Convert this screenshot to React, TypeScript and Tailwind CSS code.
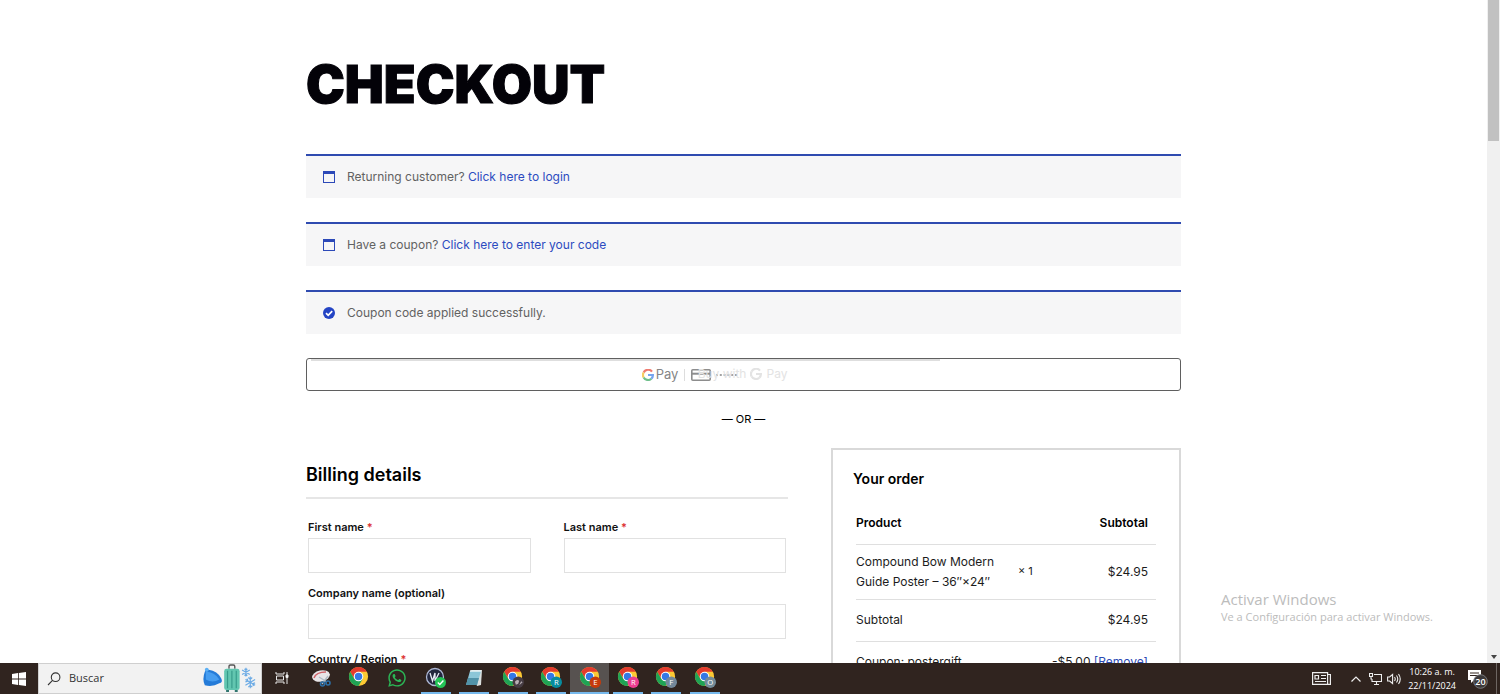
import type { ReactNode } from "react";
import { FaWhatsapp } from "react-icons/fa";

function WindowIcon() {
  return (
    <svg viewBox="0 0 12 12" className="size-3 shrink-0" aria-hidden="true">
      <path d="M0 0h12v12H0z M1 3v8h10V3z" fill="#2c49b8" fillRule="evenodd" />
    </svg>
  );
}

function CheckIcon() {
  return (
    <svg viewBox="0 0 12 12" className="size-3 shrink-0" aria-hidden="true">
      <circle cx="6" cy="6" r="6" fill="#2444c4" />
      <path d="M3 6.2l2.2 2.2 4-4.3" fill="none" stroke="#fff" strokeWidth="1.7" />
    </svg>
  );
}

function Notice({ icon, children }: { icon: ReactNode; children: ReactNode }) {
  return (
    <div className="mb-6 flex h-11 items-center gap-3 border-t-2 border-[#2f4bb0] bg-[#f6f6f7] px-[17px] text-[12px] text-[#626262]">
      {icon}
      <p>{children}</p>
    </div>
  );
}

function GoogleG({ mono = false }: { mono?: boolean }) {
  const c = mono
    ? ["#e3e3e3", "#e3e3e3", "#e3e3e3", "#e3e3e3"]
    : ["#ee7b70", "#f6cd62", "#6fbf8b", "#76a5ef"];
  return (
    <svg viewBox="0 0 24 24" className="size-3" fill="none" strokeWidth="4.4" aria-hidden="true">
      <path d="M20 5.2A10 10 0 0 0 3.3 7" stroke={c[0]} />
      <path d="M3.3 7a10 10 0 0 0 0 10" stroke={c[1]} />
      <path d="M3.3 17A10 10 0 0 0 18.6 19.5" stroke={c[2]} />
      <path d="M18.6 19.5A10 10 0 0 0 21.8 12H12" stroke={c[3]} />
    </svg>
  );
}

function PayButton() {
  return (
    <button
      type="button"
      aria-label="Google Pay"
      className="relative flex h-[33px] w-full items-center justify-center rounded-[3px] border border-[#5f5f5f] bg-white"
    >
      <span className="absolute top-0 left-1 h-0.5 w-[72%] bg-[#dedede]" />
      <span className="relative mr-[106px] flex items-center gap-0.5 text-[13px] text-[#858585]">
        <GoogleG />
        <span>Pay</span>
        <span className="ml-1 h-3 w-px bg-[#dddddd]" />
        <svg viewBox="0 0 20 12" className="ml-1 h-3 w-5" fill="none" aria-hidden="true">
          <rect x="0.8" y="0.8" width="18.4" height="10.4" rx="1" stroke="#8d8d8d" strokeWidth="1.6" />
          <path d="M1 4.7h18" stroke="#8d8d8d" strokeWidth="2" />
        </svg>
        <svg viewBox="0 0 24 4" className="ml-0.5 h-1 w-6" aria-hidden="true">
          <path d="M1 2h22" stroke="#858585" strokeWidth="1.6" strokeDasharray="2 1.8" />
        </svg>
        <span className="absolute top-0 left-[56px] flex items-center gap-1 text-[12px] whitespace-nowrap text-[#e3e3e3]">
          Buy with <GoogleG mono /> Pay
        </span>
      </span>
    </button>
  );
}

function Field({ id, label, required = false }: { id: string; label: string; required?: boolean }) {
  return (
    <div className="flex min-w-0 flex-1 flex-col">
      <label htmlFor={id} className="text-[11px] leading-[21px] font-semibold text-[#111111]">
        {label} {required && <span className="text-[#d33]">*</span>}
      </label>
      <input id={id} type="text" className="h-[35px] w-full border border-[#e1e1e1] bg-white px-2 text-[13px] outline-none" />
    </div>
  );
}

function ChromeIcon({ badge, color }: { badge?: string; color?: string }) {
  return (
    <svg viewBox="0 0 23 24" className="h-[23px] w-[22px]" aria-hidden="true">
      <circle cx="11" cy="11" r="10" fill="#fcc934" />
      <path d="M11 6h8.66A10 10 0 0 0 2.34 6l4.33 7.5z" fill="#e33b2e" />
      <path d="M2.34 6A10 10 0 0 0 11 21l4.33-7.5L11 16l-4.33-2.5z" fill="#1fa355" />
      <circle cx="11" cy="11" r="5" fill="#fff" />
      <circle cx="11" cy="11" r="3.9" fill="#3478e5" />
      {color && <circle cx="17" cy="17" r="6" fill={color} />}
      {badge && (
        <text x="17" y="20" textAnchor="middle" fontSize="8" fill="#fff" fontFamily="Open Sans, sans-serif">
          {badge}
        </text>
      )}
      {color && !badge && (
        <path d="M13.5 16.5q2-3 4.5-1l-1 3-2.5 1zM18 20l2-4 1.5 1" fill="#b9b0b4" />
      )}
    </svg>
  );
}

function TaskItem({ label, children, running, active }: { label: string; children: ReactNode; running?: boolean; active?: boolean }) {
  return (
    <button
      type="button"
      aria-label={label}
      className={`flex flex-col items-center ${active ? "bg-[#575250]" : ""}`}
    >
      <span className="flex flex-1 items-center justify-center">{children}</span>
      <span className={`h-0.5 ${active ? "w-full" : "w-[30px]"} ${running ? "bg-[#76b9ed]" : ""}`} />
    </button>
  );
}

function Taskbar() {
  return (
    <footer className="flex h-[31px] shrink-0 items-stretch bg-[#30241f] font-['Open_Sans',sans-serif] text-white">
      <button type="button" aria-label="Inicio" className="flex w-[38px] items-center justify-center">
        <svg viewBox="0 0 14 14" className="size-[14px]" fill="#fff" aria-hidden="true">
          <path d="M0 2l6-.9v5.5H0zM6.8 1 14 0v6.6H6.8zM0 7.4h6v5.5L0 12zM6.8 7.4H14V14l-7.2-1z" />
        </svg>
      </button>
      <label className="flex w-56 items-center gap-2 border border-[#cfcfcf] bg-[#f2f2f2] pr-1 pl-2 text-[#333333]">
        <svg viewBox="0 0 14 14" className="size-[14px] shrink-0" fill="none" stroke="#333" strokeWidth="1.1" aria-hidden="true">
          <circle cx="8.6" cy="5.2" r="4.3" />
          <path d="M5.5 8.3 1 13" />
        </svg>
        <input type="text" aria-label="Buscar" placeholder="Buscar" className="min-w-0 flex-1 bg-transparent text-[11px] outline-none placeholder:text-[#333333]" />
        <svg viewBox="0 0 56 30" className="h-[29px] w-14 shrink-0" aria-hidden="true">
          <path d="M3 8q1-3 4-2 9 1 13 9 2 4-2 5-7 4-15 2-3-6 0-14z" fill="#247bd8" />
          <path d="M4 8q9 0 14 8-7 4-14 0z" fill="#469df0" />
          <circle cx="5" cy="6" r="2" fill="#5cb0f5" />
          <path d="M28 5V2.5q0-1.500 1.500-1.500h3Q34 1 34 2.500V5" fill="none" stroke="#555" strokeWidth="1.400" />
          <rect x="23" y="5" width="16" height="22" rx="2.500" fill="#62c6b0" />
          <path d="M26.500 7v18M31 7v18M35.500 7v18" stroke="#379b8b" strokeWidth="1.200" />
          <path d="M25 27v2h3v-2m6 0v2h3v-2" fill="#31766f" />
          <g stroke="#6cabe5" strokeWidth="1.200" fill="none">
            <path d="M45.500 4v9M41.500 6.200l8 4.600M49.500 6.200l-8 4.600M44 5l1.500 1.500L47 5M44 12l1.500-1.500L47 12" />
            <path d="M50 13v12M45 16l10 6M55 16l-10 6M48 14l2 2 2-2M48 24l2-2 2 2M45 18.500l2.500-.8-.8-2.500M55 19.500l-2.500.8.8 2.500" />
          </g>
        </svg>
      </label>
      <nav aria-label="Aplicaciones" className="ml-px grid w-[461px] grid-cols-12">
        <TaskItem label="Vista de tareas">
          <svg viewBox="0 0 14 12" className="h-3 w-[14px]" fill="none" stroke="#e8e8e8" strokeWidth="1" aria-hidden="true">
            <path d="M1 0v2h8V0M1 12v-2h8v2M1.500 4h7v4h-7zM12 0v12" />
            <path d="M11 3h2v2.500h-2z" fill="#fff" />
          </svg>
        </TaskItem>
        <TaskItem label="Recortes">
          <svg viewBox="0 0 22 20" className="h-5 w-[22px]" aria-hidden="true">
            <ellipse cx="11" cy="8" rx="9" ry="5.500" fill="#e8e5e8" transform="rotate(-12 11 8)" />
            <path d="M4 10q2-6 12-6" stroke="#d0646a" strokeWidth="1.500" fill="none" />
            <path d="M9 9l8 5M18 8l-6 8" stroke="#aebac4" strokeWidth="1.300" />
            <circle cx="12.500" cy="16" r="2" fill="none" stroke="#2d6fa8" strokeWidth="1.600" />
            <circle cx="18" cy="15" r="2" fill="none" stroke="#2d6fa8" strokeWidth="1.600" />
          </svg>
        </TaskItem>
        <TaskItem label="Chrome"><ChromeIcon /></TaskItem>
        <TaskItem label="WhatsApp"><FaWhatsapp className="size-5 text-[#2bb655]" /></TaskItem>
        <TaskItem label="VPN" running>
          <svg viewBox="0 0 22 22" className="size-[22px]" aria-hidden="true">
            <circle cx="10" cy="10" r="8.500" fill="#22263d" stroke="#aeb8d5" strokeWidth="1.300" />
            <path d="M5 6l2.500 8L10 6v8l4-8" fill="none" stroke="#e7eaf4" strokeWidth="1.300" />
            <circle cx="15.500" cy="15.500" r="5.500" fill="#24c456" />
            <path d="M12.800 15.500l2 2 3.600-4" fill="none" stroke="#fff" strokeWidth="1.400" />
          </svg>
        </TaskItem>
        <TaskItem label="Bloc de notas" running>
          <svg viewBox="0 0 20 20" className="size-5" aria-hidden="true">
            <path d="M7 2h11l-1 15-4 1z" fill="#d9dedd" />
            <path d="M6 3h11l-4 14H2z" fill="#8cc6d8" />
            <path d="M4 10h11l-2 7H2z" fill="#5192a8" />
            <path d="M6 3h11" stroke="#e8f3f6" strokeWidth="1.500" />
          </svg>
        </TaskItem>
        <TaskItem label="Chrome perfil 1" running><ChromeIcon color="#453b42" /></TaskItem>
        <TaskItem label="Chrome perfil R" running><ChromeIcon color="#078b9e" badge="R" /></TaskItem>
        <TaskItem label="Chrome perfil E" running active><ChromeIcon color="#c63a0b" badge="E" /></TaskItem>
        <TaskItem label="Chrome perfil R2" running><ChromeIcon color="#ed3e91" badge="R" /></TaskItem>
        <TaskItem label="Chrome perfil F" running><ChromeIcon color="#73889a" badge="F" /></TaskItem>
        <TaskItem label="Chrome perfil O" running><ChromeIcon color="#738b98" badge="O" /></TaskItem>
      </nav>
      <div className="ml-auto flex items-center">
        <svg viewBox="0 0 19 13" className="mr-5 h-[13px] w-[19px]" fill="none" stroke="#eee" strokeWidth="1.200" aria-hidden="true">
          <path d="M.6.600h15v11.800H.600zM15.600 2.500h2.800v9.900h-3M9 3.500h5M9 6.500h5M3 9.500h11" />
          <path d="M3 3.500h3.500v3.500H3z" />
        </svg>
        <svg viewBox="0 0 10 6" className="mr-2 h-1.5 w-2.5" fill="none" stroke="#eee" strokeWidth="1.200" aria-hidden="true">
          <path d="M.5 5.500 5 1l4.500 4.500" />
        </svg>
        <svg viewBox="0 0 13 12" className="mr-[5px] h-3 w-[13px]" fill="none" stroke="#eee" strokeWidth="1.100" aria-hidden="true">
          <path d="M5 1.500h7.500v7H3V6M7.500 8.500v3M5 11.500h5M.5.500h3v3h-3zM2 3.500V6h1" />
        </svg>
        <svg viewBox="0 0 14 12" className="mr-[7px] h-3 w-[14px]" fill="none" stroke="#eee" strokeWidth="1.100" aria-hidden="true">
          <path d="M.6 4h2l3-2.500v9L2.600 8h-2zM7.500 4q1.500 2 0 4M9.500 2.500q2.500 3.500 0 7M11.500 1q3.500 5 0 10" />
        </svg>
        <div className="mr-3 text-center text-[9px] leading-[14px]">
          <p>10:26 a. m.</p>
          <p>22/11/2024</p>
        </div>
        <button type="button" aria-label="Notificaciones, 20" className="mr-2">
          <svg viewBox="0 0 20 20" className="size-5" aria-hidden="true">
            <path d="M0 1h13v10H6l-3 3v-3H0z" fill="#fff" />
            <path d="M2 4h9M2 6.500h9" stroke="#30241f" />
            <circle cx="12.500" cy="12.500" r="6.800" fill="#3d3a3b" stroke="#77777a" />
            <text x="12.500" y="15.700" textAnchor="middle" fontSize="9" fontWeight="600" fill="#fff" fontFamily="Open Sans, sans-serif">20</text>
          </svg>
        </button>
        <span className="mr-[3px] h-full w-px bg-[#6e6662]" />
      </div>
    </footer>
  );
}

function OrderSummary() {
  return (
    <section className="w-[350px] shrink-0 border-2 border-b-0 border-[#d9d9d9] px-5 pt-[17px]">
      <h2 className="text-[14px] leading-6 font-semibold">Your order</h2>
      <div className="px-[3px]">
        <table className="mt-[11px] w-full text-[12px] text-[#1c1c1c]">
          <thead>
            <tr className="h-[42px] border-b border-[#dfdfdf]">
              <th scope="col" colSpan={2} className="text-left font-semibold text-black">Product</th>
              <th scope="col" className="pr-2 text-right font-semibold text-black">Subtotal</th>
            </tr>
          </thead>
          <tbody>
            <tr className="h-[55px] border-b border-[#dfdfdf]">
              <td className="w-[162px] leading-5">Compound Bow Modern<br />Guide Poster – 36″×24″</td>
              <td className="text-[11px]">× 1</td>
              <td className="pr-2 text-right">$24.95</td>
            </tr>
            <tr className="h-[42px] border-b border-[#dfdfdf]">
              <td colSpan={2}>Subtotal</td>
              <td className="pr-2 text-right">$24.95</td>
            </tr>
            <tr className="h-[42px]">
              <td>Coupon: postergift</td>
              <td colSpan={2} className="pr-2 text-right">
                -$5.00 <a href="#remove" className="text-[#2c4bb4]">[Remove]</a>
              </td>
            </tr>
          </tbody>
        </table>
      </div>
    </section>
  );
}

export default function App() {
  return (
    <div className="flex h-screen flex-col bg-white font-[Inter,sans-serif] text-black">
      <div className="relative flex min-h-0 flex-1">
        <main className="min-w-0 flex-1 overflow-hidden">
          <div className="mx-auto max-w-[875px] pt-[55px]">
            <h1 className="mb-[39px] text-[52px] leading-[60px] font-black text-[#030208] [-webkit-text-stroke:1px_#030208]">CHECKOUT</h1>
            <Notice icon={<WindowIcon />}>
              Returning customer? <a href="#login" className="text-[#2c4bc0]">Click here to login</a>
            </Notice>
            <Notice icon={<WindowIcon />}>
              Have a coupon? <a href="#coupon" className="text-[#2c4bc0]">Click here to enter your code</a>
            </Notice>
            <Notice icon={<CheckIcon />}>Coupon code applied successfully.</Notice>
            <PayButton />
            <p className="mt-[18px] mb-[19px] text-center text-[11px] leading-5">— OR —</p>
            <div className="flex items-start gap-[43px]">
              <form className="min-w-0 flex-1 pt-3">
                <h2 className="border-b-2 border-[#e6e6e6] pb-2 text-[18px] leading-[29px] font-semibold">Billing details</h2>
                <div className="flex flex-col gap-2.5 px-0.5 pt-[18px]">
                  <div className="flex gap-[33px]">
                    <Field id="first-name" label="First name" required />
                    <Field id="last-name" label="Last name" required />
                  </div>
                  <Field id="company" label="Company name (optional)" />
                  <Field id="country" label="Country / Region" required />
                </div>
              </form>
              <OrderSummary />
            </div>
          </div>
        </main>
        <div className="flex w-[13px] shrink-0 flex-col items-center justify-between bg-[#f0f0f0] pb-1">
          <div className="h-[141px] w-[11px] bg-[#c1c1c1]" />
          <svg viewBox="0 0 6 4" className="h-1 w-1.5" fill="#444" aria-hidden="true">
            <path d="M0 0h6L3 4z" />
          </svg>
        </div>
        <div className="pointer-events-none absolute right-[67px] bottom-[38px] font-['Open_Sans',sans-serif] text-[#bcbcbc]">
          <p className="text-[15px] leading-5">Activar Windows</p>
          <p className="text-[11px] leading-4">Ve a Configuración para activar Windows.</p>
        </div>
      </div>
      <Taskbar />
    </div>
  );
}
